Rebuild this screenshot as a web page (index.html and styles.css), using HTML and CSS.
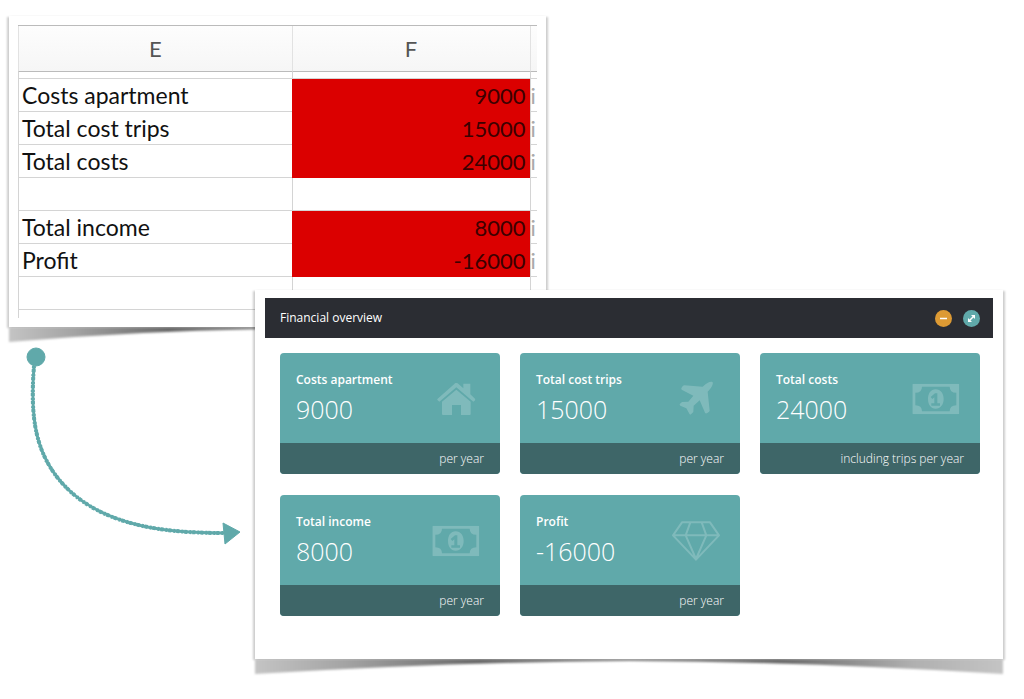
FILE: index.html
```html
<!DOCTYPE html>
<html lang="en">
<head>
    <meta charset="UTF-8">
    <meta name="viewport" content="width=device-width, initial-scale=1">
    <title>Financial overview</title>
    <link rel="stylesheet" href="styles.css">
</head>
<body>
    <!-- Shared icons -->
    <svg class="defs" width="0" height="0" aria-hidden="true">
        <defs>
            <linearGradient id="curl-shade">
                <stop offset="0" stop-color="#c4c4c4"/>
                <stop offset="0.12" stop-color="#a4a4a4"/>
                <stop offset="0.3" stop-color="#686868"/>
                <stop offset="0.5" stop-color="#909090"/>
                <stop offset="0.7" stop-color="#686868"/>
                <stop offset="0.88" stop-color="#b0b0b0"/>
                <stop offset="1" stop-color="#c4c4c4"/>
            </linearGradient>
        </defs>
        <symbol id="icon-money" viewBox="0 0 141 92">
            <path fill-rule="evenodd" d="M3 0H138Q141 0 141 3V89Q141 92 138 92H3Q0 92 0 89V3Q0 0 3 0ZM29 9Q29 27 9 27V65Q29 65 29 83H112Q112 65 132 65V27Q112 27 112 9Z"/>
            <path fill-rule="evenodd" d="M70 17C85 17 94 30 94 46S85 75 70 75S47 62 47 46S55 17 70 17ZM68 29L55 40L60 46L66 41V59H57V66H83V59H75V29Z"/>
        </symbol>
    </svg>

    <main class="scene">
        <section class="sheet paper">
            <table class="grid">
                <colgroup>
                    <col class="col-name">
                    <col class="col-value">
                    <col class="col-next">
                </colgroup>
                <thead>
                    <tr><th>E</th><th>F</th><th></th></tr>
                </thead>
                <tbody>
                    <tr class="spacer"><td></td><td></td><td></td></tr>
                    <tr><td>Costs apartment</td><td class="red">9000</td><td>i</td></tr>
                    <tr><td>Total cost trips</td><td class="red">15000</td><td>i</td></tr>
                    <tr><td>Total costs</td><td class="red">24000</td><td>i</td></tr>
                    <tr><td></td><td></td><td></td></tr>
                    <tr><td>Total income</td><td class="red">8000</td><td>i</td></tr>
                    <tr><td>Profit</td><td class="red">-16000</td><td>i</td></tr>
                    <tr><td></td><td></td><td></td></tr>
                    <tr class="tail"><td></td><td></td><td></td></tr>
                </tbody>
            </table>
            <svg class="curl" viewBox="0 0 100 16" preserveAspectRatio="none" aria-hidden="true">
                <path fill="url(#curl-shade)" d="M0 0H100V15Q74 3 50 2Q26 3 0 15Z"/>
            </svg>
        </section>

        <div class="lower">
            <div class="pointer">
                <svg width="218" height="200" viewBox="25 346 218 200" aria-hidden="true">
                    <circle class="dot" cx="36" cy="357" r="9"/>
                    <path class="line" d="M34 366C30 417 34 459 72 493C111 527 168 533 224 533"/>
                    <path class="line rough" d="M34 366C30 417 34 459 72 493C111 527 168 533 224 533"/>
                    <path class="dot" d="M223 523L240 532L225 544Z"/>
                </svg>
            </div>

            <section class="panel paper">
                <header class="panel-header">
                    <h1>Financial overview</h1>
                    <div class="tools">
                        <button type="button" class="tool minimize" aria-label="Minimize">
                            <svg viewBox="0 0 17 17"><path d="M5 8.500H12"/></svg>
                        </button>
                        <button type="button" class="tool expand" aria-label="Expand">
                            <svg viewBox="0 0 17 17"><path d="M6 11L11 6"/><path class="tip" d="M8 5H12V9ZM5 8V12H9Z"/></svg>
                        </button>
                    </div>
                </header>

                <div class="cards">
                    <article class="card">
                        <div class="card-body">
                            <div>
                                <h2>Costs apartment</h2>
                                <p class="amount">9000</p>
                            </div>
                            <svg class="icon" viewBox="-14 -11 144 120" aria-hidden="true">
                                <path d="M57 1Q60 0 63 2L80 17V3H101V35L115 48Q117 51 114 54L110 57L59 14L8 57L3 53Q0 50 3 48L53 4Q55 1 57 1Z"/>
                                <path d="M59 21L102 57V94Q102 97 99 97H73V67H46V97H19Q16 97 16 94V57Z"/>
                            </svg>
                        </div>
                        <p class="card-footer">per year</p>
                    </article>

                    <article class="card">
                        <div class="card-body">
                            <div>
                                <h2>Total cost trips</h2>
                                <p class="amount">15000</p>
                            </div>
                            <svg class="icon" viewBox="-21 -7 144 120" aria-hidden="true">
                                <path d="M98 1Q104 1 100 12Q98 19 86 31L92 88Q92 91 85 95Q80 98 78 94L62 57L44 73L43 92L36 99Q34 101 31 97L22 81L4 73Q0 70 3 67L9 62L28 61L43 43L8 25Q5 22 9 17Q12 12 16 12L71 16Q88 0 98 1Z"/>
                            </svg>
                        </div>
                        <p class="card-footer">per year</p>
                    </article>

                    <article class="card">
                        <div class="card-body">
                            <div>
                                <h2>Total costs</h2>
                                <p class="amount">24000</p>
                            </div>
                            <svg class="icon" viewBox="-1 -14 144 120" aria-hidden="true"><use href="#icon-money" width="141" height="92"/></svg>
                        </div>
                        <p class="card-footer">including trips per year</p>
                    </article>

                    <article class="card">
                        <div class="card-body">
                            <div>
                                <h2>Total income</h2>
                                <p class="amount">8000</p>
                            </div>
                            <svg class="icon" viewBox="-1 -14 144 120" aria-hidden="true"><use href="#icon-money" width="141" height="92"/></svg>
                        </div>
                        <p class="card-footer">per year</p>
                    </article>

                    <article class="card">
                        <div class="card-body">
                            <div>
                                <h2>Profit</h2>
                                <p class="amount">-16000</p>
                            </div>
                            <svg class="icon outline" viewBox="2 0 144 120" aria-hidden="true">
                                <path d="M32 4H116L143 43L74 116L5 43ZM5 43H143M57 4L43 43L74 114L105 43L91 4"/>
                            </svg>
                        </div>
                        <p class="card-footer">per year</p>
                    </article>
                </div>

                <svg class="curl" viewBox="0 0 100 16" preserveAspectRatio="none" aria-hidden="true">
                    <path fill="url(#curl-shade)" d="M0 0H100V15Q74 3 50 2Q26 3 0 15Z"/>
                </svg>
            </section>
        </div>
    </main>
</body>
</html>
```

FILE: styles.css
```css
* {
    box-sizing: border-box;
}

body {
    margin: 0;
    background: #fff;
    font-family: "Open Sans", sans-serif;
}

h1, h2, p {
    margin: 0;
}

.defs {
    position: absolute;
}

.scene {
    padding: 16px 21px 24px 0;
}

/* Sheets of paper with curled bottom corners */
.paper {
    position: relative;
    background: #fff;
    box-shadow: 2px 1px 2px rgba(0, 0, 0, 0.2), -2px 1px 2px rgba(0, 0, 0, 0.2);
}

.curl {
    position: absolute;
    left: 0;
    top: 100%;
    width: 100%;
    height: 16px;
    filter: blur(1px);
    clip-path: inset(0 -3px -4px -3px);
}

/* Spreadsheet */
.sheet {
    width: 53.5%;
    margin-left: 9px;
    padding: 9px;
}

.grid {
    width: 100%;
    table-layout: fixed;
    border-collapse: separate;
    border-spacing: 0;
    border-top: 1px solid #bbb;
    font-family: Lato, sans-serif;
    font-size: 23px;
    line-height: 31px;
    color: #111;
}

.col-value {
    width: 238px;
}

.col-next {
    width: 7px;
}

.grid th {
    height: 46px;
    padding: 0;
    border-bottom: 1px solid #bbb;
    border-left: 1px solid #e2e2e2;
    background: linear-gradient(#fdfdfd, #f6f6f6);
    font-size: 22px;
    font-weight: 400;
    color: #555;
}

.grid td {
    height: 33px;
    padding: 1px 4px 0 3px;
    border-bottom: 1px solid #d4d4d4;
    border-left: 1px solid #d4d4d4;
    white-space: nowrap;
}

.grid td:nth-child(2) {
    font-size: 22px;
    text-align: right;
}

.grid td:nth-child(3) {
    padding: 1px 0 0;
    font-size: 22px;
    color: #aaa;
}

.grid .red {
    background: #db0000;
    border-color: #db0000;
    color: #3c0000;
}

.grid .spacer td {
    height: 7px;
}

.grid .tail td {
    height: 8px;
    border-bottom: 0;
}

/* Arrow and dashboard */
.lower {
    display: flex;
    margin-top: -37px;
}

.pointer {
    flex: 0 0 255px;
    padding: 56px 0 0 25px;
}

.dot {
    fill: #60a9aa;
    stroke: #60a9aa;
    stroke-width: 1;
    stroke-linejoin: round;
}

.line {
    fill: none;
    stroke: #60a9aa;
    stroke-width: 3;
}

.rough {
    stroke-width: 4;
    stroke-dasharray: 2 1 3 2;
}

.panel {
    flex: 1;
    padding: 8px 10px 43px;
}

.panel-header {
    display: flex;
    align-items: center;
    justify-content: space-between;
    height: 40px;
    padding: 0 13px 0 15px;
    background: #2b2d33;
    color: #fff;
}

.panel-header h1 {
    font-size: 12px;
    line-height: 16px;
    font-weight: 500;
}

.tools {
    display: flex;
    gap: 11px;
}

.tool {
    width: 17px;
    height: 17px;
    padding: 0;
    border: 0;
    border-radius: 50%;
    cursor: pointer;
}

.tool svg {
    display: block;
    fill: none;
    stroke: #fff;
    stroke-width: 1.5;
}

.tool .tip {
    fill: #fff;
    stroke: none;
}

.minimize {
    background: #dd9a34;
}

.expand {
    background: #60a9aa;
}

.cards {
    display: grid;
    grid-template-columns: repeat(3, 1fr);
    gap: 21px 20px;
    padding: 15px 13px 0 15px;
}

.card {
    border-radius: 4px;
    overflow: hidden;
    background: #60a9aa;
    color: #fff;
}

.card-body {
    display: flex;
    align-items: center;
    justify-content: space-between;
    height: 90px;
    padding: 2px 20px 0 16px;
}

.card h2 {
    font-size: 12px;
    line-height: 20px;
    font-weight: 600;
}

.amount {
    font-size: 25px;
    line-height: 38px;
    font-weight: 300;
}

.icon {
    width: 48px;
    height: 40px;
    fill: rgba(255, 255, 255, 0.2);
}

.outline {
    fill: none;
    stroke: rgba(255, 255, 255, 0.2);
    stroke-width: 6;
    stroke-linejoin: round;
}

.card-footer {
    padding: 0 16px;
    background: #3e6668;
    font-size: 12px;
    line-height: 31px;
    font-weight: 300;
    text-align: right;
}
```
